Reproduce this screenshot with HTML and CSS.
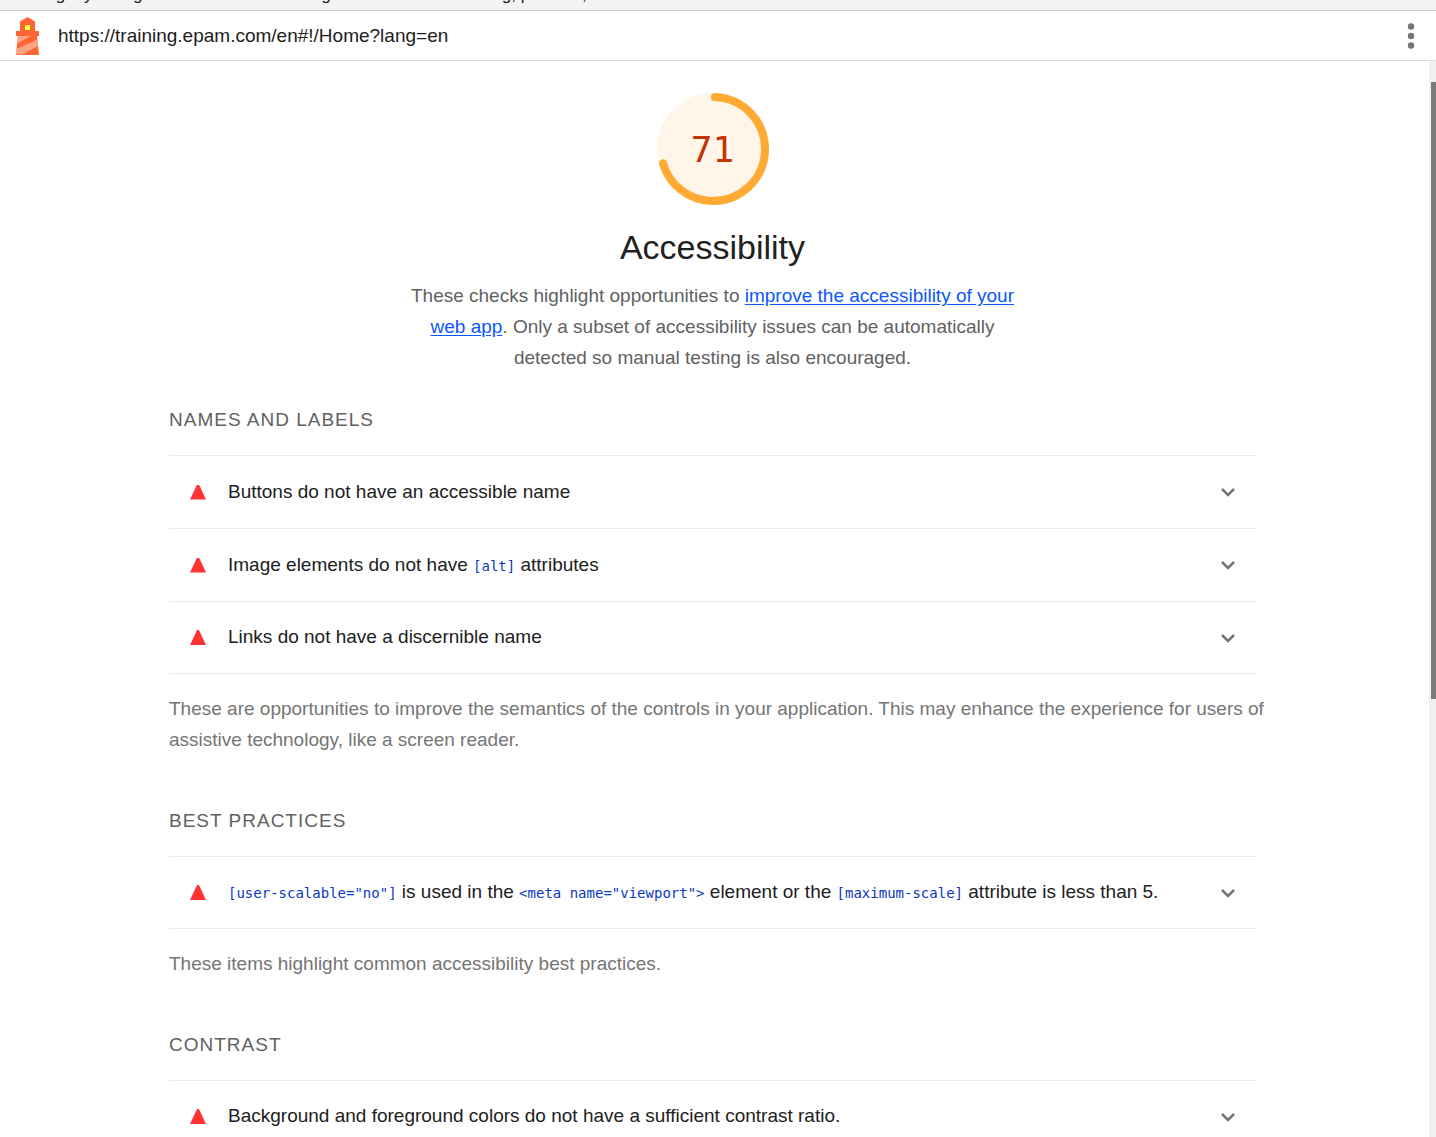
FILE: index.html
```html
<!DOCTYPE html>
<html lang="en">
<head>
<meta charset="utf-8">
<title>Lighthouse Report</title>
<link rel="stylesheet" href="styles.css">
</head>
<body>
<div class="notice"><span>Debug my timing</span><span>testing</span><span>rating, patterns,</span></div>
<header class="topbar">
  <svg class="logo" viewBox="0 0 24 38" aria-hidden="true">
    <path fill="#ff6633" d="M11.500 0L19 4.500V14h4v5h-2l2 19H0l2-19H0v-5h4V4.500z"/>
    <path fill="#ffa385" d="M2 19H15L1.300 26.500zM21.400 22.500l.8 6.500L6 37.500H0l.5-5.500z"/>
    <path fill="#ffff33" d="M9 8h5v5H9z"/>
  </svg>
  <a class="url" href="https://training.epam.com/en#!/Home?lang=en">https://training.epam.com/en#!/Home?lang=en</a>
  <button class="menu" type="button" aria-label="Tools menu">
    <svg viewBox="0 0 8 26" fill="#757575"><circle cx="4" cy="3.500" r="3.200"/><circle cx="4" cy="13" r="3.200"/><circle cx="4" cy="22.500" r="3.200"/></svg>
  </button>
</header>
<div class="viewport">
  <main class="report">
    <section class="score">
      <div class="gauge">
        <svg class="dial" viewBox="0 0 112 112" aria-hidden="true">
          <circle cx="56" cy="56" r="56" fill="#fff5e8"/>
          <circle cx="56" cy="56" r="52" fill="none" stroke="#ffaa33" stroke-width="8" stroke-linecap="round" pathLength="100" stroke-dasharray="70 100" transform="rotate(-88 56 56)"/>
        </svg>
        <span class="value">71</span>
      </div>
      <h1>Accessibility</h1>
      <p>These checks highlight opportunities to <a href="#">improve the accessibility of your web app</a>. Only a subset of accessibility issues can be automatically detected so manual testing is also encouraged.</p>
    </section>

    <section class="group">
      <h2>NAMES AND LABELS</h2>
      <div class="audits">
        <details><summary><i class="fail"></i><span class="text">Buttons do not have an accessible name</span><svg class="chevron" viewBox="0 0 16 10"><path d="M2 2l6 6 6-6"/></svg></summary></details>
        <details><summary><i class="fail"></i><span class="text">Image elements do not have <code>[alt]</code> attributes</span><svg class="chevron" viewBox="0 0 16 10"><path d="M2 2l6 6 6-6"/></svg></summary></details>
        <details><summary><i class="fail"></i><span class="text">Links do not have a discernible name</span><svg class="chevron" viewBox="0 0 16 10"><path d="M2 2l6 6 6-6"/></svg></summary></details>
      </div>
      <p>These are opportunities to improve the semantics of the controls in your application. This may enhance the experience for users of assistive technology, like a screen reader.</p>
    </section>

    <section class="group">
      <h2>BEST PRACTICES</h2>
      <div class="audits">
        <details><summary><i class="fail"></i><span class="text"><code>[user-scalable="no"]</code> is used in the <code>&lt;meta name="viewport"&gt;</code> element or the <code>[maximum-scale]</code> attribute is less than 5.</span><svg class="chevron" viewBox="0 0 16 10"><path d="M2 2l6 6 6-6"/></svg></summary></details>
      </div>
      <p>These items highlight common accessibility best practices.</p>
    </section>

    <section class="group">
      <h2>CONTRAST</h2>
      <div class="audits">
        <details><summary><i class="fail"></i><span class="text">Background and foreground colors do not have a sufficient contrast ratio.</span><svg class="chevron" viewBox="0 0 16 10"><path d="M2 2l6 6 6-6"/></svg></summary></details>
      </div>
    </section>
  </main>
  <div class="scrollbar"><div class="thumb"></div></div>
</div>
</body>
</html>
```
FILE: styles.css
```css
* { box-sizing: border-box; }
body {
  margin: 0;
  height: 100vh;
  overflow: hidden;
  display: flex;
  flex-direction: column;
  background: #fff;
  color: #212121;
  font: 19px/31px "Liberation Sans", Arial, sans-serif;
}
h1, h2, p { margin: 0; font-weight: 400; }

.notice {
  display: flex;
  align-items: flex-end;
  gap: 138px;
  height: 11px;
  flex: none;
  padding: 0 15px 5px;
  overflow: hidden;
  background: #f1f3f4;
  border-bottom: 1px solid #cacdd1;
  font-size: 17px;
  line-height: 20px;
  white-space: nowrap;
}

.topbar {
  display: flex;
  align-items: center;
  height: 50px;
  flex: none;
  padding: 0 20px 0 16px;
  border-bottom: 1px solid #dadce0;
}
.logo { width: 24px; height: 38px; }
.url { margin-left: 18px; color: inherit; text-decoration: none; }
.menu {
  margin-left: auto;
  padding: 0;
  border: 0;
  background: none;
}
.menu svg { display: block; width: 10px; height: 26px; }

.viewport { flex: 1; min-height: 0; display: flex; }
.report {
  flex: 1;
  min-width: 0;
  overflow: hidden;
  padding: 32px 173px 0 169px;
}
.scrollbar {
  flex: none;
  width: 7px;
  padding: 21px 0 0 2px;
  background: #f0f0f0;
}
.thumb { height: 58.5%; background: #7a7a7a; }

.score {
  display: flex;
  flex-direction: column;
  align-items: center;
  text-align: center;
  color: #616161;
}
.gauge { display: grid; place-items: center; }
.gauge > * { grid-area: 1 / 1; }
.dial { width: 112px; height: 112px; }
.value { padding-top: 2px; color: #c33300; font: 36px/40px "DejaVu Sans Mono", monospace; }
.score h1 { margin-top: 22px; font-size: 34px; line-height: 40px; color: #212121; }
.score p { margin-top: 13px; max-width: 605px; }
.score a { color: #0b57ff; text-underline-offset: 2px; }

.group { margin-top: 54px; color: #757575; }
.score + .group { margin-top: 35px; }
.group h2 {
  padding-bottom: 23px;
  font-size: 19px;
  line-height: 24px;
  letter-spacing: 1px;
  color: #616161;
}
.group p { margin-right: -12px; }
.audits { border-bottom: 1px solid #ebebeb; margin-bottom: 19px; }
summary {
  display: flex;
  align-items: center;
  height: 73px;
  padding: 0 20px 0 21px;
  border-top: 1px solid #ebebeb;
  list-style: none;
  color: #212121;
}
details:last-child summary { height: 72px; }
.fail {
  width: 16px;
  height: 15px;
  background: #ff3333;
  clip-path: polygon(44% 0, 56% 0, 100% 100%, 0 100%);
}
.text { flex: 1; margin-left: 22px; padding-bottom: 2px; white-space: nowrap; }
code { font: 14px/20px "DejaVu Sans Mono", monospace; color: #0938c2; }
.chevron { width: 16px; height: 10px; fill: none; stroke: #757575; stroke-width: 2.5; }
```
